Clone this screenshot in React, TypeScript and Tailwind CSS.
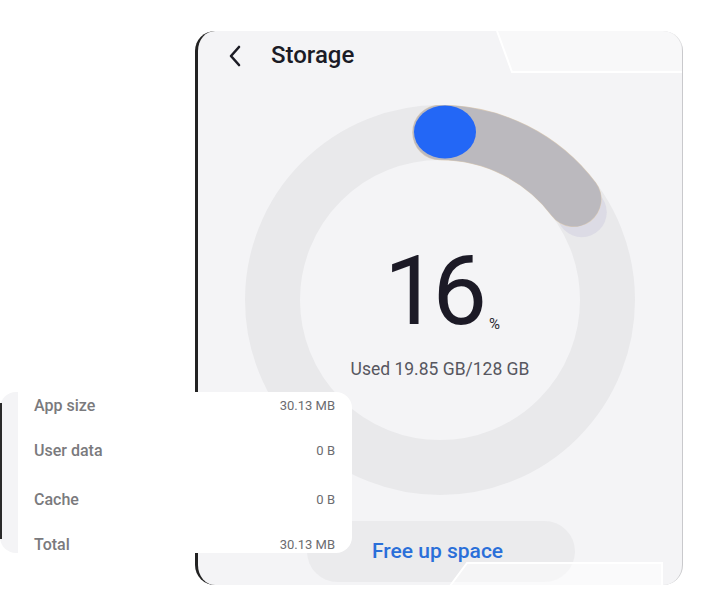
import React from "react";

const rows = [
  { label: "App size", value: "30.13 MB", mt: "mt-[2px]" },
  { label: "User data", value: "0 B", mt: "mt-[21px]" },
  { label: "Cache", value: "0 B", mt: "mt-[25px]" },
  { label: "Total", value: "30.13 MB", mt: "mt-[21px]" },
];

function Ring() {
  // 15% used, measured clockwise from the top
  const r = 167.5;
  const a = (53 * Math.PI) / 180;
  const ex = 195 + r * Math.sin(a);
  const ey = 195 - r * Math.cos(a);
  const arc = `M195 ${195 - r} A${r} ${r} 0 0 1 ${ex} ${ey}`;
  return (
    <svg width="390" height="390" viewBox="0 0 390 390">
      <circle cx="195" cy="195" r={r} fill="none" stroke="#e9e9eb" strokeWidth="55" />
      <circle cx={ex + 8} cy={ey + 13} r="25" fill="#dcdbe5" />
      <path d={arc} fill="none" stroke="#ddcdb8" strokeWidth="55.6" strokeLinecap="round" />
      <path d={arc} fill="none" stroke="#bbb9be" strokeWidth="54.6" strokeLinecap="round" />
      <ellipse cx="200" cy="27" rx="31" ry="26.5" fill="#2367f6" />
    </svg>
  );
}

export default function App() {
  return (
    <div className="relative w-[704px] h-[610px] overflow-hidden bg-white font-['Roboto',sans-serif]">
      <div className="relative ml-[195px] mt-[31px] w-[488px] h-[554px] rounded-[20px] bg-[#f4f4f6] border-l-[3px] border-r border-l-[#222] border-r-[#c9c9cc] flex flex-col">
        <div className="flex items-center h-[48px] pl-[30px]">
          <svg width="14" height="22" viewBox="0 0 14 22" className="mt-[1px]">
            <path d="M11 2 L3 11 L11 20" fill="none" stroke="#1b1b24" strokeWidth="2.6" strokeLinecap="round" strokeLinejoin="round" />
          </svg>
          <span className="ml-[29px] text-[24px] font-medium text-[#1b1b26] leading-none">Storage</span>
        </div>

        <div className="relative mt-[26px] ml-[47px] w-[390px] h-[390px]">
          <Ring />
          <div className="absolute inset-0 flex flex-col items-center">
            <div className="mt-[138px] ml-[4px] flex items-end">
              <span className="text-[97px] font-normal leading-none text-[#1c1a26] tracking-[-6px]">16</span>
              <span className="ml-[8px] mb-[5px] text-[15px] text-[#2a2a33]">%</span>
            </div>
            <div className="mt-[16px] text-[17.5px] text-[#57575f]">Used 19.85 GB/128 GB</div>
          </div>
        </div>

        <div className="mt-[26px] ml-[109px] w-[268px] h-[61px] rounded-full bg-[#ebebed] flex items-center pl-[65px]">
          <span className="text-[21px] font-medium text-[#2a6fd9]">Free up space</span>
        </div>
      </div>

      <svg className="absolute left-0 top-0 pointer-events-none" width="704" height="610" viewBox="0 0 704 610">
        <path d="M497 31 L512 72 L682 72 L682 31 Z" fill="#ffffff" fillOpacity="0.35" />
        <path d="M497 31 L512 72 L682 72" fill="none" stroke="#ffffff" strokeWidth="2" />
        <path d="M450 586 L467 563 L662 563 L662 610 L440 610 Z" fill="#ffffff" fillOpacity="0.5" />
        <path d="M450 586 L467 563 L662 563 L662 610" fill="none" stroke="#ffffff" strokeWidth="2" />
      </svg>

      <div className="absolute left-0 top-[392px] w-[352px] h-[161px] rounded-[16px] bg-white flex">
        <div className="w-[18px] bg-[#f4f4f6] rounded-l-[16px] flex flex-col">
          <div className="mt-[11px] h-[136px] w-[2px] bg-[#2a2a2a]" />
        </div>
        <div className="flex-1 flex flex-col pl-[16px] pr-[17px]">
          {rows.map((r) => (
            <div key={r.label} className={"flex items-center justify-between h-[24px] shrink-0 " + r.mt}>
              <span className="text-[16px] font-medium text-[#7a7a7d]">{r.label}</span>
              <span className="text-[13px] text-[#6c6c70]">{r.value}</span>
            </div>
          ))}
        </div>
      </div>
    </div>
  );
}
